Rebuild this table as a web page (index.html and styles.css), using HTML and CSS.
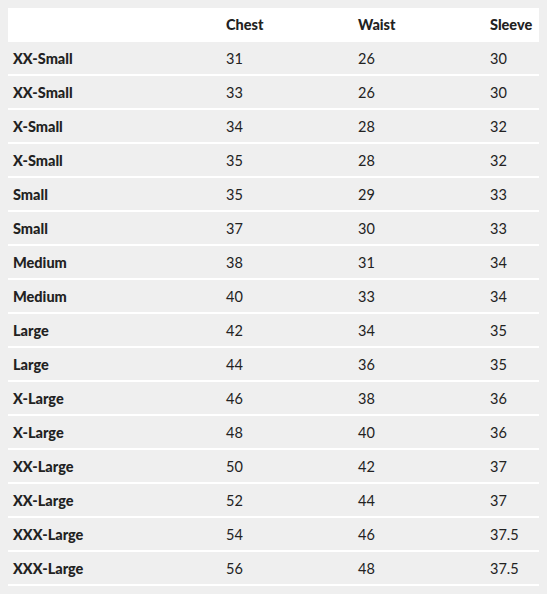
FILE: index.html
```html
<!DOCTYPE html>
<html>
<head>
<meta charset="utf-8">
<link rel="stylesheet" href="styles.css">
</head>
<body>
<table class="sizes">
  <thead>
    <tr><th class="c-size"></th><th class="c-num">Chest</th><th class="c-num">Waist</th><th class="c-last">Sleeve</th></tr>
  </thead>
  <tbody>
    <tr><th>XX-Small</th><td>31</td><td>26</td><td>30</td></tr>
    <tr><th>XX-Small</th><td>33</td><td>26</td><td>30</td></tr>
    <tr><th>X-Small</th><td>34</td><td>28</td><td>32</td></tr>
    <tr><th>X-Small</th><td>35</td><td>28</td><td>32</td></tr>
    <tr><th>Small</th><td>35</td><td>29</td><td>33</td></tr>
    <tr><th>Small</th><td>37</td><td>30</td><td>33</td></tr>
    <tr><th>Medium</th><td>38</td><td>31</td><td>34</td></tr>
    <tr><th>Medium</th><td>40</td><td>33</td><td>34</td></tr>
    <tr><th>Large</th><td>42</td><td>34</td><td>35</td></tr>
    <tr><th>Large</th><td>44</td><td>36</td><td>35</td></tr>
    <tr><th>X-Large</th><td>46</td><td>38</td><td>36</td></tr>
    <tr><th>X-Large</th><td>48</td><td>40</td><td>36</td></tr>
    <tr><th>XX-Large</th><td>50</td><td>42</td><td>37</td></tr>
    <tr><th>XX-Large</th><td>52</td><td>44</td><td>37</td></tr>
    <tr><th>XXX-Large</th><td>54</td><td>46</td><td>37.5</td></tr>
    <tr><th>XXX-Large</th><td>56</td><td>48</td><td>37.5</td></tr>
  </tbody>
</table>
</body>
</html>
```

FILE: styles.css
```css
html, body {
  background: #efefef;
}
body {
  margin: 8px;
  font-family: Lato, "Open Sans", sans-serif;
  font-size: 14.5px;
  color: #222222;
}
.sizes {
  width: 530px;
  border-collapse: collapse;
  table-layout: fixed;
}
.sizes th, .sizes td {
  height: 31px;
  padding: 1px 5px 0;
  text-align: left;
  vertical-align: middle;
  line-height: 16px;
  border-bottom: 2px solid #ffffff;
}
.sizes thead th {
  background: #ffffff;
  font-weight: 900;
}
.sizes tbody th {
  font-weight: 900;
}
.sizes td {
  font-weight: 400;
}
.c-size { width: 203px; }
.c-num { width: 122px; }
.c-last { width: 63px; }
```
